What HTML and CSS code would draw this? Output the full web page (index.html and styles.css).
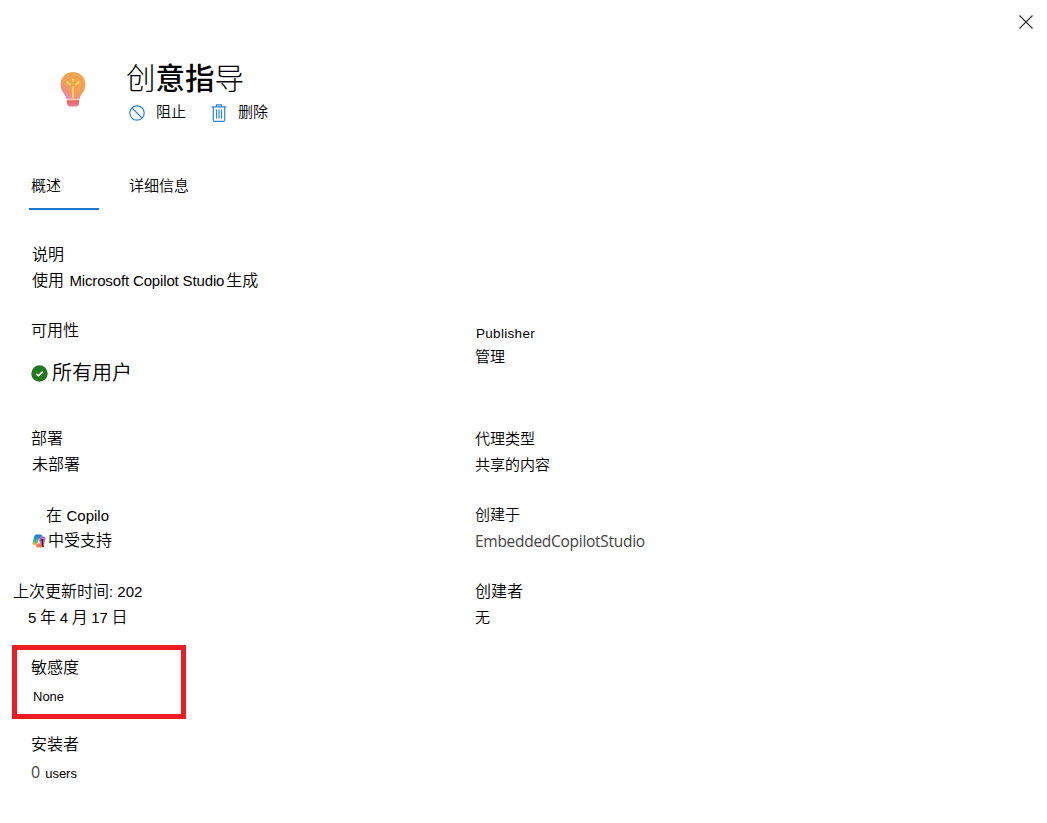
FILE: index.html
```html
<!DOCTYPE html>
<html lang="zh-CN">
<head>
  <meta charset="UTF-8">
  <title>创意指导</title>
  <link rel="stylesheet" href="styles.css">
</head>
<body>
  <div class="panel">
    <div class="topbar">
      <button class="close" aria-label="关闭">
        <svg width="14" height="14" viewBox="0 0 14 14"><path d="M.5.5l13 13M13.5.5l-13 13" stroke="#333" stroke-width="1.2" fill="none"/></svg>
      </button>
    </div>

    <div class="header">
      <svg class="logo" width="30" height="38" viewBox="0 0 30 38">
        <defs>
          <linearGradient id="bulb" x1="0.85" y1="0" x2="0.2" y2="1">
            <stop offset="0" stop-color="#f3a64e"/>
            <stop offset="0.55" stop-color="#f0a055"/>
            <stop offset="0.8" stop-color="#ef8d80"/>
            <stop offset="1" stop-color="#e87fe0"/>
          </linearGradient>
          <linearGradient id="base" x1="0" y1="0" x2="0" y2="1">
            <stop offset="0" stop-color="#e0605a"/>
            <stop offset="1" stop-color="#f0809a"/>
          </linearGradient>
        </defs>
        <path d="M15 2C7.800 2 2.500 7.500 2.500 14.500c0 4.500 2 7.300 4.200 10.200.9 1.300 1.500 2.600 1.800 4.300h13c.3-1.700.9-3 1.800-4.300 2.200-2.900 4.200-5.700 4.200-10.200C27.500 7.500 22.200 2 15 2z" fill="url(#bulb)"/>
        <path d="M8.500 28.500h13v1.800h-13z" fill="#f8c3ae"/>
        <path d="M9 30.300h12v3.200c0 1.700-1.300 2.900-3 2.900h-6c-1.700 0-3-1.200-3-2.900z" fill="url(#base)"/>
        <path d="M15 17v10.500M9.200 12.200l2.800 2.300M20.800 12.200l-2.800 2.300M15 9.500v1.500" stroke="#fbd35c" stroke-width="2.200" stroke-linecap="round" fill="none"/>
      </svg>
      <div class="heading">
        <h1>创<b>意指</b>导</h1>
        <div class="actions">
          <button class="action">
            <svg width="16" height="16" viewBox="0 0 16 16" fill="none" stroke="#2b88d8" stroke-width="1.200"><circle cx="8" cy="8" r="7.200"/><path d="M3 3l10 10"/></svg>
            <span>阻止</span>
          </button>
          <button class="action">
            <svg width="16" height="18" viewBox="0 0 16 18" fill="none" stroke="#2b88d8" stroke-width="1.200"><path d="M.5 2.800h15M5.500 2.800V.8h5v2M2.300 2.800v13.400q0 1.200 1.200 1.200h9q1.200 0 1.200-1.200V2.800M5.500 5.500v9M8 5.500v9M10.500 5.500v9"/></svg>
            <span>删除</span>
          </button>
        </div>
      </div>
    </div>

    <div class="tabs">
      <button class="tab active">概述</button>
      <button class="tab">详细信息</button>
    </div>

    <div class="details">
      <div class="field">
        <div class="label shift">说明</div>
        <div class="value shift">使用 <span class="latin product">Microsoft Copilot Studio</span>生成</div>
      </div>
      <div class="field"></div>

      <div class="field">
        <div class="label">可用性</div>
        <div class="value status">
          <svg width="17" height="17" viewBox="0 0 17 17"><circle cx="8.500" cy="8.500" r="8.200" fill="#217821"/><path d="M5.200 8.800l2.200 2.100 4.300-4.300" stroke="#fff" stroke-width="1.500" fill="none"/></svg>
          所有用户
        </div>
      </div>
      <div class="field publisher">
        <div class="label latin">Publisher</div>
        <div class="value">管理</div>
      </div>

      <div class="field">
        <div class="label">部署</div>
        <div class="value shift">未部署</div>
      </div>
      <div class="field small">
        <div class="label">代理类型</div>
        <div class="value">共享的内容</div>
      </div>

      <div class="field supported">
        <div class="label indent">在 <span class="latin">Copilo</span></div>
        <div class="value support">
          <svg width="14" height="14" viewBox="0 0 14 14">
            <defs>
              <linearGradient id="cpLeft" x1="0" y1="0" x2="0" y2="1">
                <stop offset="0" stop-color="#1c75d8"/>
                <stop offset="0.5" stop-color="#34aaa0"/>
                <stop offset="1" stop-color="#e8c23a"/>
              </linearGradient>
              <linearGradient id="cpRight" x1="0" y1="0" x2="0" y2="1">
                <stop offset="0" stop-color="#a564d8"/>
                <stop offset="0.5" stop-color="#e8619b"/>
                <stop offset="1" stop-color="#f47b45"/>
              </linearGradient>
            </defs>
            <path d="M4.500.5h4c1.300 0 1.700 1 2 2L7.800 4 5.800 9.500c-.3 1-.8 1.500-1.800 1.500H2.300C.8 11 .2 9.800.6 8.300L2.200 2.500C2.600 1.200 3.300.5 4.500.5z" fill="url(#cpLeft)"/>
            <path d="M9.800 2.500h1.500c1.700 0 2.500 1.300 2.100 2.800L12 11.300c-.4 1.400-1.100 2.200-2.400 2.200H5.800c-1.300 0-1.800-1-2-2.500h.7c.7 0 1-.6 1.300-1.500l2-5.500c.4-1 .9-1.500 2-1.500z" fill="url(#cpRight)"/>
            <path d="M6.800 4.500L5.500 9.500h2.500z" fill="#fff"/>
            <path d="M8.500 6h2.500M10.500 5v6.500q0 1 1.300 1" stroke="#151535" stroke-width="1.200" fill="none"/>
          </svg>
          中受支持
        </div>
      </div>
      <div class="field small">
        <div class="label">创建于</div>
        <div class="value source">EmbeddedCopilotStudio</div>
      </div>

      <div class="field updated">
        <div class="label">上次更新时间<span class="latin">: 202</span></div>
        <div class="value date"><span class="latin">5</span> 年 <span class="latin">4</span> 月 <span class="latin">17</span> 日</div>
      </div>
      <div class="field">
        <div class="label">创建者</div>
        <div class="value none">无</div>
      </div>

      <div class="field sensitivity">
        <div class="label">敏感度</div>
        <div class="value latin">None</div>
      </div>
      <div class="field"></div>

      <div class="field">
        <div class="label">安装者</div>
        <div class="value installs"><span class="count">0</span><span class="latin">users</span></div>
      </div>
    </div>
  </div>
</body>
</html>
```
FILE: styles.css
```css
body {
  margin: 0;
  background: #fff;
  color: #000;
  font-family: "Liberation Sans", "Noto Sans CJK SC", sans-serif;
  font-size: 16px;
  font-weight: 350;
}

.panel {
  box-sizing: border-box;
  height: 823px;
  overflow: hidden;
}

svg {
  display: block;
  flex: none;
}

button {
  padding: 0;
  border: none;
  background: none;
  color: inherit;
  font: inherit;
  cursor: pointer;
}

.topbar {
  display: flex;
  justify-content: flex-end;
  height: 61px;
  padding: 15px 14px 0 0;
  box-sizing: border-box;
}

.close {
  width: 14px;
  height: 14px;
}

/* header */
.header {
  display: flex;
  height: 109px;
  padding-left: 58px;
}

.logo {
  margin-top: 9px;
}

.heading {
  margin-left: 38px;
}

h1 {
  margin: 0;
  font-size: 29.5px;
  font-weight: 300;
  line-height: 35px;
}

h1 b {
  font-weight: 500;
}

.actions {
  display: flex;
  gap: 25px;
  margin: 1px 0 0 3px;
}

.action {
  display: flex;
  align-items: center;
  gap: 11px;
  height: 32px;
  font-size: 15px;
}

.action span {
  padding-bottom: 5px;
}

/* tabs */
.tabs {
  display: flex;
  gap: 30px;
  height: 72px;
  padding-left: 29px;
}

.tab {
  height: 40px;
  box-sizing: border-box;
  padding-bottom: 12px;
  font-size: 15px;
  text-align: left;
}

.tab.active {
  width: 70px;
  padding-left: 2px;
  border-bottom: 2px solid #1a78cf;
  padding-bottom: 10px;
}

/* details */
.details {
  display: grid;
  grid-template-columns: 444px 1fr;
  grid-template-rows: 76px 108px 76px 77px 76px 77px 80px;
  padding-left: 31px;
}

.label,
.value {
  height: 26px;
  line-height: 26px;
  white-space: nowrap;
}

.latin {
  font-size: 15px;
}

.shift {
  padding-left: 1px;
}

.product {
  margin: 0 2px 0 1px;
  letter-spacing: -0.15px;
}

.small {
  font-size: 15px;
}

.status {
  display: flex;
  align-items: center;
  gap: 4px;
  margin-top: 16px;
  font-size: 20px;
}

.publisher {
  padding-top: 3px;
  font-size: 15px;
}

.publisher .latin {
  height: 23px;
  padding-left: 1px;
  font-size: 13.5px;
  letter-spacing: 0.3px;
}

.supported .label {
  padding-top: 1px;
  height: 25px;
}

.indent {
  padding-left: 15px;
}

.support {
  display: flex;
  align-items: center;
  gap: 2px;
  padding-left: 1px;
}

.source {
  color: #444;
  font-family: "Open Sans", "Noto Sans", sans-serif;
  font-size: 15.5px;
  font-weight: 400;
  letter-spacing: -0.28px;
}

.updated {
  margin-left: -18px;
}

.date {
  padding-left: 15px;
  word-spacing: -0.8px;
}

.none {
  font-size: 15px;
}

.sensitivity {
  box-sizing: border-box;
  width: 174px;
  height: 74px;
  margin: -10px 0 0 -19px;
  padding: 5px 0 0 14px;
  border: 5px solid #ed1c24;
}

.sensitivity .latin {
  padding: 3px 0 0 2px;
  font-size: 13px;
}

.installs {
  display: flex;
  gap: 5px;
  padding-top: 1px;
}

.installs .latin {
  padding-top: 2px;
  font-size: 13px;
}

.count {
  color: #444;
  font-family: "Open Sans", "Noto Sans", sans-serif;
  font-weight: 400;
}
```
